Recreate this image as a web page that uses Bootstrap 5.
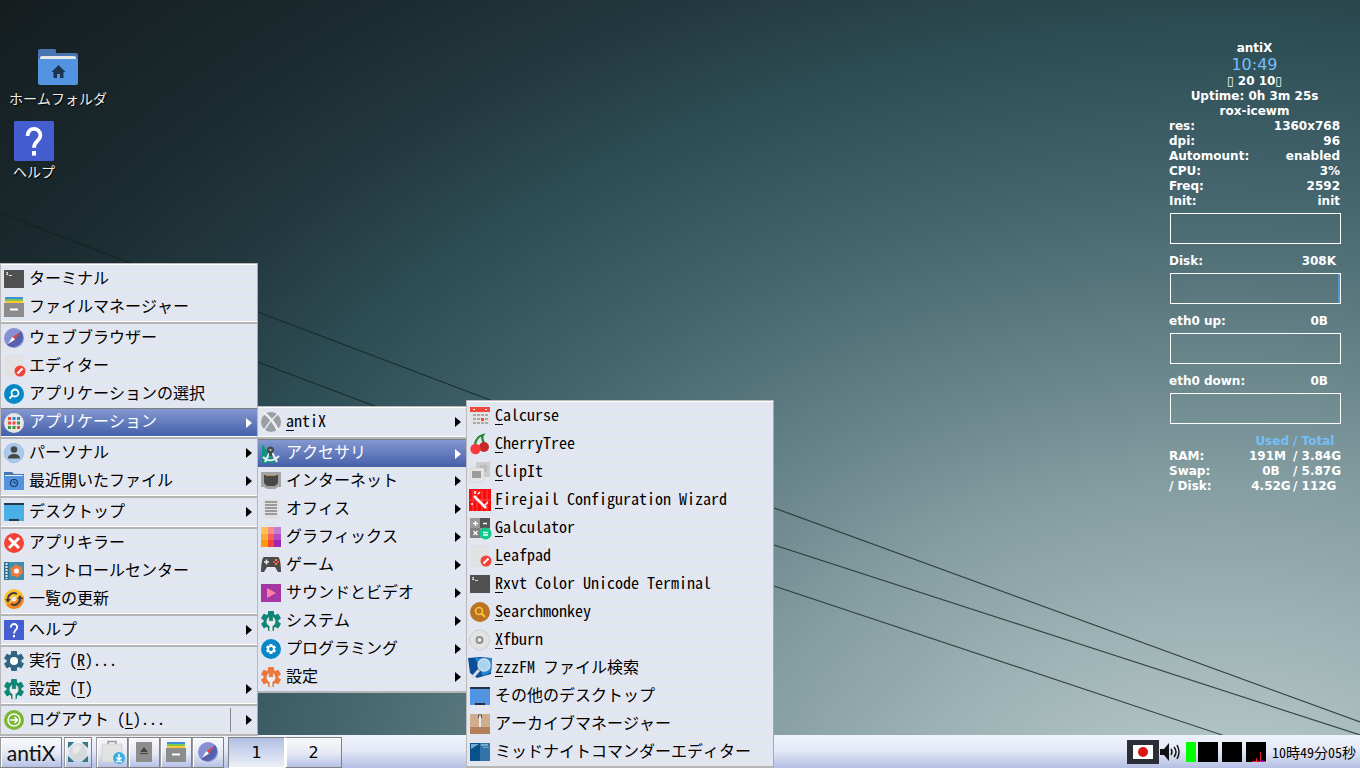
<!DOCTYPE html>
<html lang="ja">
<head>
<meta charset="utf-8">
<meta name="viewport" content="width=device-width, initial-scale=1">
<title>antiX デスクトップ</title>
<link rel="stylesheet" href="https://cdn.jsdelivr.net/npm/bootstrap@5.3.0/dist/css/bootstrap.min.css">
<script src="https://cdn.jsdelivr.net/npm/bootstrap@5.3.0/dist/js/bootstrap.bundle.min.js" defer></script>
<style>
:root{--jp:"Noto Sans Mono CJK JP","Noto Sans CJK JP",sans-serif}
body{font-family:var(--jp);font-size:16px;overflow:hidden;color:#000}
button{font:inherit;color:inherit}
symbol{overflow:visible}
.desktop{background:radial-gradient(88% 115% at 90% 112%,#b6c8c8 10%,#9fb4b6 26%,#849da1 43%,#678489 57%,#4f6e75 70%,#40616a 79%,#2e4e55 93%,#23393f 106%,#1a2a2e 121%,#151c1e 142%)}
.wires{position:absolute;inset:0;width:100%;height:100%;fill:none;stroke:#14201f;stroke-opacity:.75;stroke-width:1.2}
.workarea{min-height:0;padding:48px 20px 0 9px}
.shortcuts{gap:13px}
.shortcut{background:none;border:0;padding:0;color:#eee;font-size:14px;line-height:20px;text-shadow:1px 1px 1px #000}
.shortcut svg{width:40px;height:40px}
/* system monitor */
.monitor{width:171px;font:bold 12px/15px "DejaVu Sans",sans-serif;color:#fff;margin-top:-7px}
.monitor .now{font-size:16px;line-height:18px;font-weight:400;color:#74bffa}
.graph{height:31px;width:171px;border:1px solid #fff;margin:4px 0 10px 1px}
.graph i{width:2px;background:#4e96d4}
.monitor table{width:171px;border-collapse:collapse;table-layout:fixed}
.monitor td,.monitor th{padding:0;white-space:nowrap}
.monitor .c-used{width:44px;text-align:center}
.monitor .c-total{width:47px}
.accent{color:#74bffa}
/* menus */
.popup{position:absolute;list-style:none;margin:0;padding:1px 0 0;border:1px solid #b5b5b5;border-bottom-width:2px;background:#fff;border-color:#b9b9b9 #a9a9a9 #b5b5b5 #b9b9b9}
.menu-main{left:0;bottom:32px;width:258px}
.menu-apps{left:257px;bottom:75px;width:210px}
.menu-acc{left:466px;bottom:0;width:308px}
.popup ul{list-style:none;margin:0;padding:0;background:repeating-conic-gradient(#d8e0f5 0 25%,#ececec 0 50%) 0 0/2px 2px}
.popup ul+ul{margin-top:3px;box-shadow:0 -2px 0 #b4b4b4}
.entry{display:flex;align-items:center;width:100%;height:28px;border:0;background:none;padding:0 5px 0 3px;text-align:left;white-space:pre}
.entry span{flex:1;line-height:24px;margin:-5px 0 0 5px}
.entry svg{width:20px;height:20px;overflow:visible;flex:none}
.entry u{text-underline-offset:3px}
.more::after{content:"";border:5px solid transparent;border-left:6px solid #000;border-right:0}
.chosen{background:linear-gradient(#8498d0,#4560aa);color:#fff;border-top:1px solid #7b7f88}
.chosen::after{border-left-color:#fff}
.split em{width:1px;height:24px;background:#888;margin-right:15px}
/* panel */
.panel{height:33px;background:linear-gradient(#eef2fb,#e6eaf6 45%,#b3bfe4);padding-top:1px}
.tile{display:flex;align-items:center;justify-content:center;height:31px;width:32px;padding:0;border:1px solid #808080;border-left-color:#999;background:linear-gradient(#f4f5f9 15%,#e4e8f4 55%,#b5c1e5);box-shadow:inset 1px 1px 0 #fff}
.tile svg{width:20px;height:20px;overflow:visible}
.start{width:62px;margin-right:2px;font:21px Lato,sans-serif;color:#111}
.show-desk{width:28px}
.tile.space{width:57px;font:16px "DejaVu Sans",sans-serif;border-left-color:#fff}
.tile.current{background:linear-gradient(#b1bfe5,#edf0f8);border-color:#808080 #fff #fff #808080;box-shadow:none}
.meter{width:20px;height:20px;background:#000}
.clock{font-size:14px;line-height:20px;margin-left:6px}
</style>
</head>
<body>
<svg width="0" height="0" class="position-absolute" aria-hidden="true">
<defs>
<symbol id="term" viewBox="0 0 20 20"><path fill="#505050" d="M0 1h20v18H0z"/><path fill="none" stroke="#ddd" d="M4 3.500H2.500l1.500 2H2M5 6.500h3"/></symbol>
<symbol id="files" viewBox="0 0 20 20"><path fill="#3f8ee0" d="M1 0h18v3H1z"/><path fill="#7bc94a" d="M1 2h18v2H1z"/><path fill="#ffc83c" d="M1 4h18v3H1z"/><path fill="#8c8c8c" d="M0 6h20v14H0z"/><path fill="#fff" d="M6 11.500h8v2H6z"/></symbol>
<symbol id="web" viewBox="0 0 20 20"><circle cx="10" cy="10" r="10" fill="#8790d3"/><path fill="#5661ad" d="M17 3A10 10 0 0 1 3 17z"/><path fill="#e8413a" d="M16 4l-5 7.500L8.500 9z"/><path fill="#fff" d="M4 16l4.500-7 2.500 2.500z"/></symbol>
<symbol id="edit" viewBox="0 0 20 20"><path fill="#e3e3e3" stroke="#d4d4d4" stroke-width=".5" d="M2 0h16v20H2z"/><circle cx="16" cy="15" r="5.500" fill="#f04437"/><path stroke="#fff" stroke-width="2" d="M13.500 17.500l5-5"/></symbol>
<symbol id="find" viewBox="0 0 20 20"><circle cx="10" cy="10" r="10" fill="#0687c6"/><circle cx="11" cy="9" r="3.500" fill="none" stroke="#fff" stroke-width="1.800"/><path stroke="#fff" stroke-width="2" d="M8.500 11.500l-3 3"/></symbol>
<symbol id="apps" viewBox="0 0 20 20"><circle cx="10" cy="10" r="10" fill="#e6e6e4"/><path fill="#ec4d43" d="M4 4h3v3H4zM8.500 8.500h3v3h-3zM13 13h3v3h-3zM4 8.500h3v3H4z"/><path fill="#2b87d8" d="M8.500 4h3v3h-3zM13 4h3v3h-3z"/><path fill="#3c983f" d="M13 8.500h3v3h-3zM4 13h3v3H4zM8.500 13h3v3h-3z"/></symbol>
<symbol id="person" viewBox="0 0 20 20"><circle cx="10" cy="10" r="9.700" fill="#abc9ed" stroke="#93aed0" stroke-width=".6"/><circle cx="10" cy="6.500" r="3.300" fill="#484848"/><path fill="#484848" d="M4 15.500c0-3 2.500-4.500 6-4.500s6 1.500 6 4.500z"/></symbol>
<symbol id="recent" viewBox="0 0 20 20"><path fill="#4577b5" d="M0 1h8l2 2h10v4H0z"/><path fill="#eee" d="M1 4h18v2H1z"/><path fill="#5294e2" d="M0 5h20v14H0z"/><circle cx="10" cy="12" r="3.500" fill="none" stroke="#1d3c5f" stroke-width="1.200"/><path fill="none" stroke="#1d3c5f" d="M10 10v2h2"/></symbol>
<symbol id="desk" viewBox="0 0 20 20"><path fill="#48b0e4" d="M0 1h20v18H0z"/><path fill="#26384d" d="M0 1h20v2H0zM5 17h10v2H5z"/></symbol>
<symbol id="desk2" viewBox="0 0 20 20"><path fill="#5294e2" d="M0 1h20v18H0z"/><path fill="#203249" d="M0 1h20v2H0zM5 17h10v2H5z"/></symbol>
<symbol id="kill" viewBox="0 0 20 20"><circle cx="10" cy="10" r="10" fill="#f44336"/><path stroke="#fff" stroke-width="3" d="M5 5l10 10M15 5L5 15"/></symbol>
<symbol id="control" viewBox="0 0 20 20"><path fill="#3d8fad" d="M0 1h20v18H0z"/><path fill="#2b6f8c" d="M0 1h5v18H0z"/><path stroke="#e5f1f4" stroke-width="2" stroke-dasharray="2 1" d="M2.500 2v16"/><circle cx="12.500" cy="10" r="4" fill="#fff" stroke="#f17a3c" stroke-width="3"/><circle cx="12.500" cy="10" r="5.700" fill="none" stroke="#f17a3c" stroke-width="1.500" stroke-dasharray="3 3"/></symbol>
<symbol id="update" viewBox="0 0 20 20"><circle cx="10" cy="10" r="10" fill="#ffc02e"/><path fill="#f58420" d="M19.500 7A10 10 0 0 1 2 16z"/><circle cx="10" cy="10" r="2.500" fill="#e8e8e8"/><path fill="none" stroke="#3f4145" stroke-width="2" d="M4 11a6 6 0 0 1 9-6M16 9a6 6 0 0 1-9 6"/><path fill="#3f4145" d="M1 10h6l-3 4zM13 10h6l-3-4z"/></symbol>
<symbol id="help" viewBox="0 0 20 20"><rect width="20" height="20" rx=".7" fill="#445ed0"/><path fill="none" stroke="#fff" stroke-width="1.900" d="M6.800 7.500C6.700 2.700 13.300 3 13.200 7.200c0 2.500-3.200 3-3.200 6.200"/><path fill="#fff" d="M9 15h2v2.300H9z"/></symbol>
<symbol id="cog" viewBox="0 0 20 20"><circle cx="10" cy="10" r="7.500"/><rect x="7" width="6" height="20" rx="1"/><rect x="7" width="6" height="20" rx="1" transform="rotate(60 10 10)"/><rect x="7" width="6" height="20" rx="1" transform="rotate(120 10 10)"/></symbol>
<symbol id="run" viewBox="0 0 20 20"><use href="#cog" fill="#30647f"/><circle cx="10" cy="10" r="4" fill="#fff"/></symbol>
<symbol id="wrench" viewBox="0 0 20 20"><path fill="#eee" stroke="#aaa" stroke-width=".4" d="M8.500 20v-5C4.500 13.500 5 7.500 8 6v4h4V6c3 1.500 3.500 7.500-.5 9v5z"/></symbol>
<symbol id="set" viewBox="0 0 20 20"><use href="#cog" fill="#0d8777"/><use href="#wrench"/></symbol>
<symbol id="set2" viewBox="0 0 20 20"><use href="#cog" fill="#f27538"/><use href="#wrench"/></symbol>
<symbol id="logout" viewBox="0 0 20 20"><circle cx="10" cy="10" r="10" fill="#78b833"/><circle cx="10" cy="10" r="6" fill="none" stroke="#fff" stroke-width="1.500"/><path fill="none" stroke="#fff" stroke-width="1.500" d="M6 10h7M10.500 7l3 3-3 3"/></symbol>
<symbol id="antix" viewBox="0 0 20 20"><circle cx="10" cy="10" r="10" fill="#9a9fa5"/><path fill="none" stroke="#eee" stroke-width="2.500" d="M3 1c5 3 12 12 14 18"/><path fill="none" stroke="#eee" stroke-width="1.500" d="M19 0C13 5 6 13 2 20"/></symbol>
<symbol id="access" viewBox="0 0 20 20"><path fill="#109481" d="M1 0l14 19H1z"/><path fill="none" stroke="#eee" stroke-width="2" d="M10 6L4 18M10 6l6 12M2 13c5 5 11 4 16-1"/><circle cx="9.500" cy="6" r="3.500" fill="#424d4e"/><path fill="#424d4e" d="M8 8h3v4H8z"/><circle cx="9.500" cy="6" r="1" fill="#ddd"/></symbol>
<symbol id="net" viewBox="0 0 20 20"><path fill="#a3a3a3" d="M1 1h18q1 0 1 1v14h-3l-3 2H6l-3-2H0V2q0-1 1-1z"/><path fill="#484848" d="M3 4h14v8l-3 3H6l-3-3z"/><path fill="#b6914a" d="M5 4h10v1H5z"/></symbol>
<symbol id="office" viewBox="0 0 20 20"><path fill="#e1e1e1" d="M2 0h16v20H2z"/><path stroke="#555" stroke-width="1.200" d="M4 3h12M4 6h12M4 9h12M4 12h12M4 15h12"/></symbol>
<symbol id="graphics" viewBox="0 0 20 20"><path fill="#ffc059" d="M0 0h7v7H0z"/><path fill="#fc8c83" d="M7 0h6v7H7z"/><path fill="#c37bd0" d="M13 0h7v7h-7z"/><path fill="#ffac37" d="M0 7h7v6H0z"/><path fill="#f66057" d="M7 7h6v6H7z"/><path fill="#b54ac3" d="M13 7h7v6h-7z"/><path fill="#fc990c" d="M0 13h7v7H0z"/><path fill="#f44335" d="M7 13h6v7H7z"/><path fill="#9d27b0" d="M13 13h7v7h-7z"/></symbol>
<symbol id="game" viewBox="0 0 20 20"><path fill="#4b4b4b" d="M3 2h14c2 0 3 9 3 15h-3l-3-5H6l-3 5H0C0 11 1 2 3 2z"/><path stroke="#eee" stroke-width="1.500" d="M3 7h5M5.500 4.500v5"/><path fill="#e84" d="M14 4h2v2h-2zM14 8h2v2h-2z"/><path fill="#e44" d="M12 6h2v2h-2zM16 6h2v2h-2z"/></symbol>
<symbol id="media" viewBox="0 0 20 20"><path fill="#a537a2" d="M0 1h20v18H0z"/><path fill="#ff80ab" d="M6 5l9 5-9 5z"/></symbol>
<symbol id="dev" viewBox="0 0 20 20"><circle cx="10" cy="10" r="10" fill="#0687c6"/><svg x="5" y="5" width="10" height="10" viewBox="0 0 20 20"><use href="#cog" fill="#fff"/></svg><circle cx="10" cy="10" r="2" fill="#0687c6"/></symbol>
<symbol id="cal" viewBox="0 0 20 20"><path fill="#e3e3e3" d="M0 1h20v18H0z"/><path fill="#f4483c" d="M0 1h20v5H0z"/><path fill="#fff" d="M3 3h2v1H3zM15 3h2v1h-2z"/><path stroke="#aaa" stroke-width="2" stroke-dasharray="3 1" d="M3 9h15M3 13h15M3 17h15"/><path fill="#f4483c" d="M11 12h3v3h-3z"/></symbol>
<symbol id="cherry" viewBox="0 0 20 20"><path fill="none" stroke="#258a31" stroke-width="2.300" d="M5 10C6 5 9 2 13 1c-2 3 0 6 1 8"/><circle cx="14" cy="13" r="5" fill="#c52828"/><circle cx="5.500" cy="15" r="5.200" fill="#f93838"/></symbol>
<symbol id="clip" viewBox="0 0 20 20"><path fill="#ccc" d="M6 0h14v15H6z"/><path fill="#b9b9b9" d="M10 3h7v7h-7z"/><path fill="#e5e5e5" stroke="#c8c8c8" stroke-width=".4" d="M0 6h14v14H0z"/><path fill="#9c9c9c" d="M2 9h9v7H2z"/></symbol>
<symbol id="fire" viewBox="0 0 20 20"><path fill="#f80c0c" d="M-1-1h22v22H-1z"/><path stroke="#fa6b6b" stroke-width=".7" d="M3 0v21M7 0v21M12 0v21M17 0v21M-1 10h22"/><path stroke="#fff" stroke-width="2.500" d="M4 6l12 12"/><path stroke="#fff" stroke-width="1.500" d="M5 1v3M10 2l-2 2M2 13v2M18 12l-3 3"/></symbol>
<symbol id="calc" viewBox="0 0 20 20"><path fill="#999" d="M0 0h20v20H0z"/><path fill="#555" d="M10 0h10v10H10z"/><path fill="#818181" d="M0 10h10v10H0z"/><path stroke="#fff" stroke-width="1.300" d="M3 5.500h5M5.500 3v5M13 5.500h4M3.500 13l4 4M7.500 13l-4 4"/><circle cx="15.500" cy="15.500" r="6" fill="#0acb87"/><path stroke="#fff" stroke-width="1.300" d="M13 14.500h5M13 17h5"/></symbol>
<symbol id="monkey" viewBox="0 0 20 20"><circle cx="10" cy="10" r="10" fill="#b87325"/><circle cx="9" cy="9" r="3.500" fill="none" stroke="#ffc738" stroke-width="1.600"/><path stroke="#ffc738" stroke-width="2" d="M11.500 11.500l3.500 3.500"/></symbol>
<symbol id="disc" viewBox="0 0 20 20"><circle cx="9.500" cy="10" r="10" fill="#e3e3e3" stroke="#bcbcbc" stroke-width=".6"/><circle cx="9.500" cy="10" r="3" fill="#e8e8e8" stroke="#909090" stroke-width="2"/></symbol>
<symbol id="zzz" viewBox="0 0 20 20"><path fill="#0b4f9a" d="M-2 0l12-1 12 1-1 16-14 4-7-5z"/><path fill="#2588cd" d="M5 0h17l-1 14-8 4z"/><circle cx="14" cy="7" r="6" fill="#a9d2f0" stroke="#dce3e8" stroke-width="1.300"/><path stroke="#d9dadc" stroke-width="3" d="M9 12l-7 8"/></symbol>
<symbol id="archive" viewBox="0 0 20 20"><path fill="#cfad8f" d="M0 0h20v20H0z"/><path fill="#b3805a" d="M0 13h20v7H0z"/><path stroke="#e8e8e8" stroke-width="2" d="M10 1v12"/><path fill="none" stroke="#555" d="M8.500 4V1h3v3"/></symbol>
<symbol id="mc" viewBox="0 0 20 20"><path fill="#09518b" d="M0 1h10v18H0z"/><path fill="#3473a8" d="M10 1h10v18H10z"/><path fill="#79aacb" d="M1 2h8L1 7zM11 2h7v2h-7zM13 5h6v1h-6z"/></symbol>
</defs>
</svg>

<div class="desktop position-relative vh-100 d-flex flex-column">
  <svg class="wires" viewBox="0 0 1360 768" preserveAspectRatio="none" aria-hidden="true"><path d="M0 213L258 312L490 400L774 508L1360 722M258 362L385 410L774 545L1360 735M774 586L1225 736"/></svg>

  <main class="workarea position-relative flex-grow-1 d-flex justify-content-between align-items-start">
    <div class="shortcuts d-flex flex-column align-items-start">
      <button class="shortcut d-flex flex-column align-items-center">
        <svg viewBox="0 0 40 40"><path fill="#4876b3" d="M0 3q0-2 2-2h15q1 0 1 2v2h20q2 0 2 2v8H0z"/><path fill="#e7e7e7" d="M2 10q0-2 2-2h32q2 0 2 2v4H2z"/><path fill="#5294e2" d="M0 11h40v24q0 2-2 2H2q-2 0-2-2z"/><path fill="#1d344f" d="M20.500 17l7 7h-2v6h-3.500v-4h-3v4h-3.500v-6h-2z"/></svg>
        <span>ホームフォルダ</span>
      </button>
      <button class="shortcut d-flex flex-column align-items-center ms-1"><svg><use href="#help"/></svg><span>ヘルプ</span></button>
    </div>

    <aside class="monitor">
      <div class="text-center">
        <div>antiX</div><div class="now">10:49</div><div>▯ 20 10▯</div><div>Uptime: 0h 3m 25s</div><div>rox-icewm</div>
      </div>
      <div class="d-flex justify-content-between"><span>res:</span><span>1360x768</span></div>
      <div class="d-flex justify-content-between"><span>dpi:</span><span>96</span></div>
      <div class="d-flex justify-content-between"><span>Automount:</span><span>enabled</span></div>
      <div class="d-flex justify-content-between"><span>CPU:</span><span>3%</span></div>
      <div class="d-flex justify-content-between"><span>Freq:</span><span>2592</span></div>
      <div class="d-flex justify-content-between"><span>Init:</span><span>init</span></div>
      <div class="graph"></div>
      <div class="d-flex justify-content-between pe-1"><span>Disk:</span><span>308K</span></div>
      <div class="graph d-flex justify-content-end"><i></i></div>
      <div class="d-flex justify-content-between pe-1"><span>eth0 up:</span><span class="pe-2">0B</span></div>
      <div class="graph"></div>
      <div class="d-flex justify-content-between pe-1"><span>eth0 down:</span><span class="pe-2">0B</span></div>
      <div class="graph"></div>
      <table>
        <tr class="accent"><td></td><th class="c-used text-end pe-1">Used</th><th class="c-total">/ Total</th></tr>
        <tr><th>RAM:</th><td class="c-used text-start">191M</td><td>/ 3.84G</td></tr>
        <tr><th>Swap:</th><td class="c-used">0B</td><td>/ 5.87G</td></tr>
        <tr><th>/ Disk:</th><td class="c-used">4.52G</td><td>/ 112G</td></tr>
      </table>
    </aside>
  </main>

  <footer class="panel position-relative d-flex align-items-center">
    <button class="tile start">antiX</button>
    <button class="tile show-desk me-1" aria-label="デスクトップ表示"><svg viewBox="0 0 22 22"><path fill="#327b84" d="M0 0h7L0 7zM22 0h-7l7 7zM0 22h7l-7-7zM22 22h-7l7-7z"/><circle cx="11" cy="11" r="10" fill="#d5d9dc"/><path fill="#e6e8ea" d="M5 5q5-5 10 0l-3 6-6 3z"/></svg></button>
    <button class="tile" aria-label="パッケージ"><svg viewBox="0 0 20 20"><path fill="none" stroke="#999" stroke-width="1.500" d="M6 2v-2.500h8V2"/><path fill="#e2e2e2" stroke="#c5c5c5" stroke-width=".5" d="M0 2h20v18H0z"/><circle cx="17" cy="16" r="6" fill="#3aaee2"/><path fill="none" stroke="#fff" stroke-width="1.500" d="M17 12v6M14.500 15.500L17 18l2.500-2.500M14 19.500h6"/></svg></button>
    <button class="tile" aria-label="取り出し"><svg viewBox="0 0 20 20"><path fill="#8d8d8d" d="M2 0h16v20H2z"/><path fill="#444" d="M6 10l4-5 4 5zM6 11h8v1H6z"/></svg></button>
    <button class="tile" aria-label="ファイル"><svg><use href="#files"/></svg></button>
    <button class="tile me-1" aria-label="ブラウザー"><svg><use href="#web"/></svg></button>
    <button class="tile space current">1</button>
    <button class="tile space">2</button>
    <div class="ms-auto d-flex align-items-center me-1">
      <svg width="32" height="24"><path fill="#2b2d37" d="M0 0h32v24H0z"/><path fill="#fff" d="M6 5h20v14H6z"/><circle cx="16" cy="12" r="5" fill="#da1515"/></svg>
      <svg class="me-1" width="23" height="22"><path fill="#111" d="M1 8h4l5-6v18l-5-6H1z"/><path fill="none" stroke="#111" stroke-width="1.500" d="M12 8q2 3 0 6M15 6q4 5 0 10M18 4q4 7 0 14"/></svg>
      <svg class="me-1" width="32" height="20"><path fill="#0f0" d="M0 0h10v20H0z"/><path d="M12 0h20v20H12z"/></svg>
      <div class="meter me-1"></div>
      <svg class="meter" width="20" height="20"><path stroke="#f01c3c" fill="none" d="M14.500 10v10M10.500 16v4M6 19.500h14"/><path stroke="#80f" d="M16.500 18v2M11.500 18v2"/></svg>
      <time class="clock">10時49分05秒</time>
    </div>
  </footer>

  <nav class="popup menu-main" aria-label="メインメニュー">
    <ul>
      <li><button class="entry"><svg><use href="#term"/></svg><span>ターミナル</span></button></li>
      <li><button class="entry"><svg><use href="#files"/></svg><span>ファイルマネージャー</span></button></li>
    </ul>
    <ul>
      <li><button class="entry"><svg><use href="#web"/></svg><span>ウェブブラウザー</span></button></li>
      <li><button class="entry"><svg><use href="#edit"/></svg><span>エディター</span></button></li>
      <li><button class="entry"><svg><use href="#find"/></svg><span>アプリケーションの選択</span></button></li>
      <li><button class="entry more chosen"><svg><use href="#apps"/></svg><span>アプリケーション</span></button></li>
    </ul>
    <ul>
      <li><button class="entry more"><svg><use href="#person"/></svg><span>パーソナル</span></button></li>
      <li><button class="entry more"><svg><use href="#recent"/></svg><span>最近開いたファイル</span></button></li>
    </ul>
    <ul>
      <li><button class="entry more"><svg><use href="#desk"/></svg><span>デスクトップ</span></button></li>
    </ul>
    <ul>
      <li><button class="entry"><svg><use href="#kill"/></svg><span>アプリキラー</span></button></li>
      <li><button class="entry"><svg><use href="#control"/></svg><span>コントロールセンター</span></button></li>
      <li><button class="entry"><svg><use href="#update"/></svg><span>一覧の更新</span></button></li>
    </ul>
    <ul>
      <li><button class="entry more"><svg><use href="#help"/></svg><span>ヘルプ</span></button></li>
    </ul>
    <ul>
      <li><button class="entry"><svg><use href="#run"/></svg><span>実行 (<u>R</u>)...</span></button></li>
      <li><button class="entry more"><svg><use href="#set"/></svg><span>設定 (<u>T</u>)</span></button></li>
    </ul>
    <ul>
      <li><button class="entry more split"><svg><use href="#logout"/></svg><span>ログアウト (<u>L</u>)...</span><em></em></button></li>
    </ul>
  </nav>

  <nav class="popup menu-apps" aria-label="アプリケーション">
    <ul>
      <li><button class="entry more"><svg><use href="#antix"/></svg><span><u>a</u>ntiX</span></button></li>
    </ul>
    <ul>
      <li><button class="entry more chosen"><svg><use href="#access"/></svg><span>アクセサリ</span></button></li>
      <li><button class="entry more"><svg><use href="#net"/></svg><span>インターネット</span></button></li>
      <li><button class="entry more"><svg><use href="#office"/></svg><span>オフィス</span></button></li>
      <li><button class="entry more"><svg><use href="#graphics"/></svg><span>グラフィックス</span></button></li>
      <li><button class="entry more"><svg><use href="#game"/></svg><span>ゲーム</span></button></li>
      <li><button class="entry more"><svg><use href="#media"/></svg><span>サウンドとビデオ</span></button></li>
      <li><button class="entry more"><svg><use href="#set"/></svg><span>システム</span></button></li>
      <li><button class="entry more"><svg><use href="#dev"/></svg><span>プログラミング</span></button></li>
      <li><button class="entry more"><svg><use href="#set2"/></svg><span>設定</span></button></li>
    </ul>
  </nav>

  <nav class="popup menu-acc" aria-label="アクセサリ">
    <ul>
      <li><button class="entry"><svg><use href="#cal"/></svg><span><u>C</u>alcurse</span></button></li>
      <li><button class="entry"><svg><use href="#cherry"/></svg><span><u>C</u>herryTree</span></button></li>
      <li><button class="entry"><svg><use href="#clip"/></svg><span><u>C</u>lipIt</span></button></li>
      <li><button class="entry"><svg><use href="#fire"/></svg><span><u>F</u>irejail Configuration Wizard</span></button></li>
      <li><button class="entry"><svg><use href="#calc"/></svg><span><u>G</u>alculator</span></button></li>
      <li><button class="entry"><svg><use href="#edit"/></svg><span><u>L</u>eafpad</span></button></li>
      <li><button class="entry"><svg><use href="#term"/></svg><span><u>R</u>xvt Color Unicode Terminal</span></button></li>
      <li><button class="entry"><svg><use href="#monkey"/></svg><span><u>S</u>earchmonkey</span></button></li>
      <li><button class="entry"><svg><use href="#disc"/></svg><span><u>X</u>fburn</span></button></li>
      <li><button class="entry"><svg><use href="#zzz"/></svg><span><u>z</u>zzFM ファイル検索</span></button></li>
      <li><button class="entry"><svg><use href="#desk2"/></svg><span>その他のデスクトップ</span></button></li>
      <li><button class="entry"><svg><use href="#archive"/></svg><span>アーカイブマネージャー</span></button></li>
      <li><button class="entry"><svg><use href="#mc"/></svg><span>ミッドナイトコマンダーエディター</span></button></li>
    </ul>
  </nav>
</div>
</body>
</html>
